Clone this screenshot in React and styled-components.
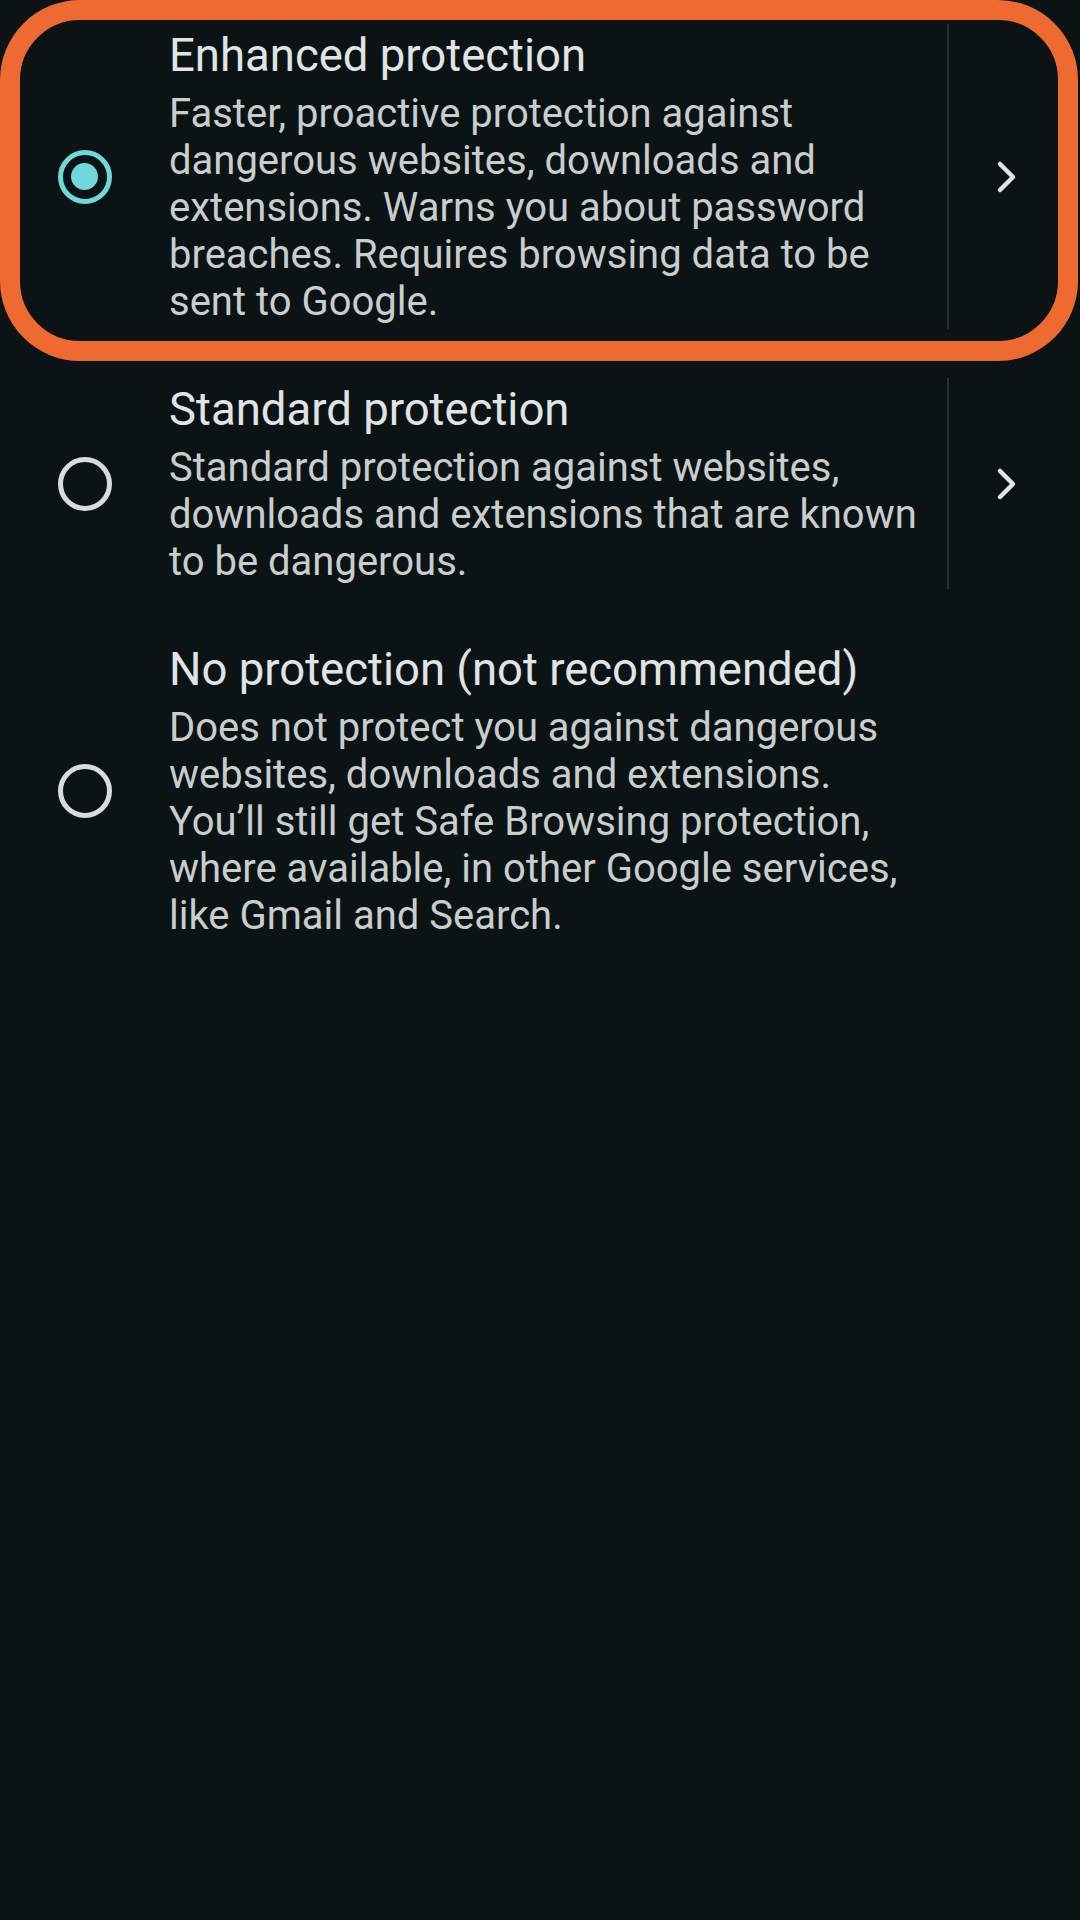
import React from 'react';
import styled, { createGlobalStyle } from 'styled-components';

const GlobalStyle = createGlobalStyle`
  html, body {
    margin: 0;
    padding: 0;
    background: #0b1315;
  }
  body {
    font-family: Roboto, "Noto Sans", sans-serif;
  }
`;

const options = [
  {
    id: 'enhanced',
    title: 'Enhanced protection',
    desc: 'Faster, proactive protection against\ndangerous websites, downloads and\nextensions. Warns you about password\nbreaches. Requires browsing data to be\nsent to Google.',
    selected: true,
    more: true,
  },
  {
    id: 'standard',
    title: 'Standard protection',
    desc: 'Standard protection against websites,\ndownloads and extensions that are known\nto be dangerous.',
    selected: false,
    more: true,
  },
  {
    id: 'none',
    title: 'No protection (not recommended)',
    desc: 'Does not protect you against dangerous\nwebsites, downloads and extensions.\nYou\u2019ll still get Safe Browsing protection,\nwhere available, in other Google services,\nlike Gmail and Search.',
    selected: false,
    more: false,
  },
];

export default function App() {
  return (
    <Page>
      <GlobalStyle />
      <List>
        {options.map((o) => (
          <Row key={o.id} highlighted={o.selected}>
            <RadioCell>
              <Radio checked={o.selected} />
            </RadioCell>
            <Texts>
              <Title>{o.title}</Title>
              <Desc>{o.desc}</Desc>
            </Texts>
            {o.more && (
              <>
                <Divider />
                <MoreCell>
                  <svg width="24" height="34" viewBox="0 0 24 34">
                    <path
                      d="M5 4 L18 17 L5 30"
                      fill="none"
                      stroke="#e2e4e4"
                      strokeWidth="4.5"
                      strokeLinecap="round"
                      strokeLinejoin="round"
                    />
                  </svg>
                </MoreCell>
              </>
            )}
          </Row>
        ))}
      </List>
    </Page>
  );
}

const Page = styled.div`
  width: 1080px;
  min-height: 1920px;
  background: #0b1315;
  padding-top: 28px;
  box-sizing: border-box;
`;

const List = styled.div`
  display: flex;
  flex-direction: column;
  gap: 57px;
`;

const Row = styled.div.withConfig({ shouldForwardProp: (p) => p !== 'highlighted' })`
  position: relative;
  display: grid;
  grid-template-columns: 169px 1fr 2px 116px;
  padding-right: 15px;
  align-items: stretch;

  ${(p) =>
    p.highlighted &&
    `
    &::after {
      content: '';
      position: absolute;
      top: -28px;
      bottom: -36px;
      left: 0;
      right: 2px;
      border: 20px solid #ee6a31;
      border-radius: 80px;
      pointer-events: none;
    }
  `}
`;

const RadioCell = styled.div`
  display: flex;
  align-items: center;
  justify-content: center;
`;

const Radio = styled.span.withConfig({ shouldForwardProp: (p) => p !== 'checked' })`
  width: 54px;
  height: 54px;
  box-sizing: border-box;
  border-radius: 50%;
  border: 5px solid ${(p) => (p.checked ? '#6fd8d8' : '#d9dcdc')};
  display: flex;
  align-items: center;
  justify-content: center;

  &::before {
    content: '';
    width: 27px;
    height: 27px;
    border-radius: 50%;
    background: #6fd8d8;
    display: ${(p) => (p.checked ? 'block' : 'none')};
  }
`;

const Texts = styled.div`
  padding-right: 10px;
`;

const Title = styled.div`
  font-size: 45.5px;
  line-height: 56px;
  color: #e1e4e4;
  margin-bottom: 6px;
`;

const Desc = styled.div`
  font-size: 40px;
  line-height: 47px;
  color: #c9cdcd;
  white-space: pre-line;
`;

const Divider = styled.div`
  background: #283133;
  margin: -4px 0;
`;

const MoreCell = styled.div`
  display: flex;
  align-items: center;
  justify-content: center;
`;
